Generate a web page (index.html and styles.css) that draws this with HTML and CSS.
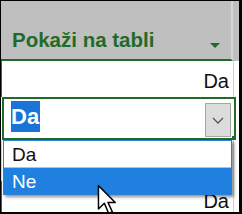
FILE: index.html
```html
<!DOCTYPE html>
<html lang="hr">
<head>
    <meta charset="UTF-8">
    <link rel="stylesheet" href="styles.css">
</head>
<body>
    <div class="frame">
        <!-- zaglavlje stupca -->
        <div class="row header-row">
            <div class="cell header-cell">
                <span class="header-title">Pokaži na tabli</span>
                <svg class="filter-arrow" viewBox="0 0 10 5"><path d="M0 0H10L5 5Z" fill="#1f6b2a"/></svg>
            </div>
            <div class="rest"></div>
        </div>

        <div class="row data-row">
            <div class="cell value-cell">Da</div>
            <div class="rest"></div>
        </div>

        <div class="row edit-row">
            <div class="editor">
                <span class="selected-text">Da</span>
                <span class="combo-button">
                    <svg viewBox="0 0 12 7"><path d="M1 1L6 6L11 1" fill="none" stroke="#555" stroke-width="1.3"/></svg>
                </span>
            </div>
            <div class="handle"></div>
        </div>

        <div class="row data-row empty-row">
            <div class="cell"></div>
            <div class="rest"></div>
        </div>

        <div class="row data-row">
            <div class="cell value-cell">Da</div>
            <div class="rest"></div>
        </div>

        <!-- padajući popis -->
        <ul class="dropdown-list">
            <li>Da</li>
            <li class="active">Ne</li>
        </ul>

        <svg class="cursor" viewBox="0 0 13 21">
            <path d="M1 1V17L5 13L8 20L10.5 19L7.5 12.5H12.5Z" fill="#fff" stroke="#000" stroke-width="1" stroke-linejoin="round"/>
        </svg>
    </div>
</body>
</html>
```

FILE: styles.css
```css
body {
    margin: 0;
    padding: 0;
    background: #fff;
    font-family: 'Liberation Sans', Arial, sans-serif;
}

.frame {
    position: relative;
    width: 242px;
    height: 214px;
    box-sizing: border-box;
    border-style: solid;
    border-color: #000;
    border-width: 1px 3px 2px 1px;
    overflow: hidden;
    background: #fff;
}

.row {
    display: flex;
}

.cell {
    width: 232px;
    flex-shrink: 0;
    box-sizing: border-box;
    border-right: 1px solid #d4d4d4;
}

.rest {
    flex: 1;
}

.header-row {
    height: 60px;
    background: #bfbfbf;
}

.header-cell {
    display: flex;
    align-items: flex-end;
    justify-content: space-between;
    height: 60px;
    padding: 0 11px 8px 11px;
    border-bottom: 2px solid #1f6b2a;
    border-right: 2px solid #d6d6d6;
}

.header-title {
    color: #1f6b2a;
    font-weight: bold;
    font-size: 20.5px;
    line-height: 22px;
}

.filter-arrow {
    width: 10px;
    height: 5px;
    margin-bottom: 3px;
}

.data-row {
    height: 36px;
    border-left: 1px solid #555;
}

.value-cell {
    text-align: right;
    padding: 8px 4px 0 0;
    font-size: 20px;
    line-height: 24px;
    color: #111;
}

.empty-row {
    height: 41px;
    border-left-color: #d4d4d4;
}

.edit-row {
    position: relative;
    height: 43px;
}

.editor {
    display: flex;
    justify-content: space-between;
    width: 234px;
    margin-left: 1px;
    box-sizing: border-box;
    border: 2px solid #1e6b2a;
    padding: 2px 3px 1px 7px;
}

.selected-text {
    background: #1a74d8;
    color: #fff;
    font-weight: bold;
    font-size: 22px;
    line-height: 32px;
    height: 31px;
    padding: 0 1px 0 0;
}

.combo-button {
    display: flex;
    align-items: center;
    justify-content: center;
    width: 26px;
    height: 34px;
    margin-top: 2px;
    box-sizing: border-box;
    background: #dcdcdc;
    border: 1px solid #a6a6a6;
}

.combo-button svg {
    width: 12px;
    height: 7px;
}

.handle {
    position: absolute;
    left: 231px;
    top: 39px;
    width: 4px;
    height: 4px;
    background: #1e6b2a;
}

.dropdown-list {
    position: absolute;
    left: 2px;
    top: 139px;
    width: 229px;
    margin: 0;
    padding: 0;
    list-style: none;
    box-sizing: border-box;
    background: #fff;
    border: 1px solid #2b7fd6;
    box-shadow: 2px 2px 3px rgba(0, 0, 0, 0.45);
}

.dropdown-list li {
    height: 26px;
    padding-left: 8px;
    font-size: 19px;
    line-height: 27px;
    color: #111;
}

.dropdown-list li.active {
    background: #1f80e0;
    color: #fff;
    border-top: 1px solid #9cc7f1;
    height: 26px;
}

.cursor {
    position: absolute;
    left: 96px;
    top: 183px;
    width: 19px;
    height: 31px;
}
```
